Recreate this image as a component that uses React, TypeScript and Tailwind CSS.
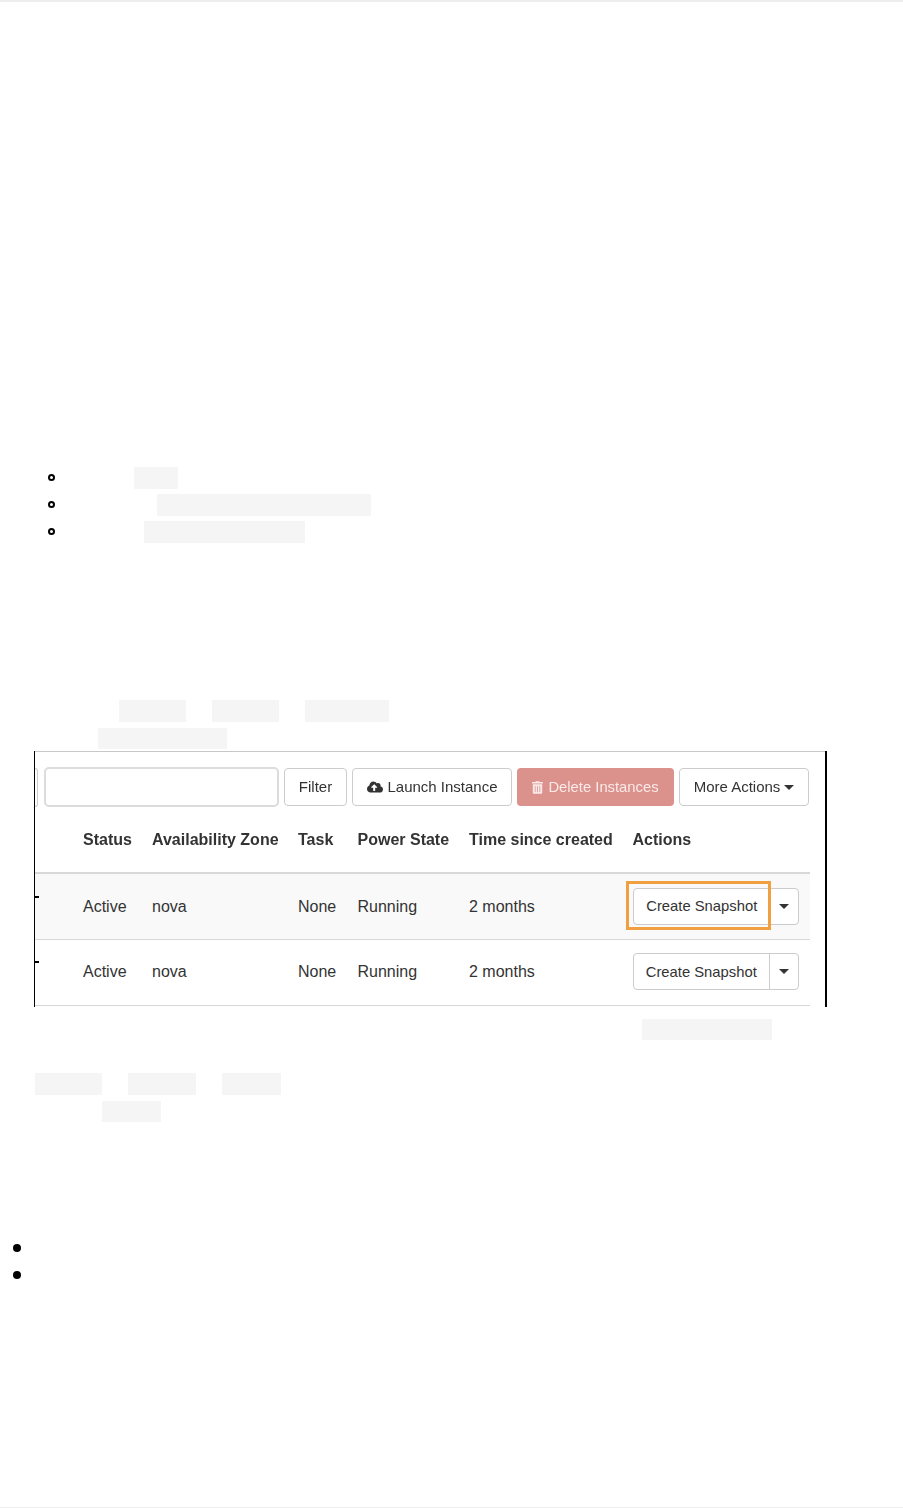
import { FaCloudUploadAlt, FaTrashAlt } from "react-icons/fa";

const gridCols = "grid grid-cols-[48px_69px_146px_59.5px_111.5px_163.5px_1fr] items-center";

function Block({ className }: { className: string }) {
  return <div className={`h-full bg-[#f5f5f5] ${className}`} />;
}

function Caret() {
  return (
    <span className="inline-block w-0 h-0 border-x-[5px] border-x-transparent border-t-[5px] border-t-[#333333]" />
  );
}

function Ring() {
  return <span className="ml-[48px] mb-[2px] w-[7px] h-[7px] rounded-full border-2 border-black" />;
}

function Dot() {
  return <span className="ml-[13px] w-[8px] h-[8px] rounded-full bg-black" />;
}

function ToolButton({ children, className = "" }: { children: React.ReactNode; className?: string }) {
  return (
    <button
      className={`h-[38px] flex items-center justify-center gap-[4px] rounded-[4px] border border-[#cccccc] bg-white text-[#333333] text-[15px] ${className}`}
    >
      {children}
    </button>
  );
}

function SubList() {
  return (
    <div className="flex flex-col gap-[5px] mt-[465px]">
      <div className="flex items-center h-[22px]">
        <Ring />
        <Block className="ml-[79px] w-[44px]" />
      </div>
      <div className="flex items-center h-[22px]">
        <Ring />
        <Block className="ml-[102px] w-[214px]" />
      </div>
      <div className="flex items-center h-[22px]">
        <Ring />
        <Block className="ml-[89px] w-[161px]" />
      </div>
    </div>
  );
}

function SnapshotButton({ divider }: { divider: boolean }) {
  return (
    <div className="flex h-[37px] w-[166.5px] rounded-[4px] border border-[#cccccc] bg-white text-[#333333] text-[14.8px]">
      <span className={`w-[136.5px] flex items-center justify-center ${divider ? "border-r border-[#cccccc]" : ""}`}>
        Create Snapshot
      </span>
      <span className="flex-1 flex items-center justify-center">
        <Caret />
      </span>
    </div>
  );
}

function Row({ striped, highlighted, className = "" }: { striped?: boolean; highlighted?: boolean; className?: string }) {
  return (
    <div
      className={`relative ${gridCols} h-[66px] text-[16px] text-[#333333] border-b border-[#d8d8d8] ${striped ? "bg-[#f9f9f9]" : "bg-white"} ${className}`}
    >
      <div className="h-full flex items-center">
        <span className="w-[4px] h-[2px] bg-black -mt-[20px]" />
      </div>
      <div>Active</div>
      <div>nova</div>
      <div>None</div>
      <div>Running</div>
      <div>2 months</div>
      <div>
        <SnapshotButton divider={!highlighted} />
      </div>
      {highlighted && (
        <div className="absolute left-[591px] top-[7px] w-[145px] h-[49px] border-[3px] border-[#f0a040]" />
      )}
    </div>
  );
}

function Screenshot() {
  return (
    <div className="ml-[34px] w-[793px] h-[256px] border-l-[1.5px] border-r-2 border-black font-['Liberation_Sans',Arial,sans-serif]">
      <div className="h-[1px] bg-[#c8c8c8]" />
      <div className="w-[775px] blur-[0.35px]">
        <div className="flex items-center h-[56px] pt-[14px]">
          <div className="w-[3px] h-[39px] rounded-r-[4px] border border-l-0 border-[#cccccc]" />
          <div className="ml-[6px] w-[235px] h-[40px] rounded-[5px] border-2 border-[#dcdcdc] bg-white" />
          <ToolButton className="ml-[5px] w-[63px]">Filter</ToolButton>
          <ToolButton className="ml-[5px] w-[160px] pl-[1px]">
            <FaCloudUploadAlt className="w-[16px] h-[16px]" />
            Launch Instance
          </ToolButton>
          <button className="ml-[5px] w-[157px] h-[38px] flex items-center justify-center gap-[5px] rounded-[4px] bg-[#db928c] text-[#f9e9e8] text-[14.8px]">
            <FaTrashAlt className="w-[11px] h-[13px]" />
            Delete Instances
          </button>
          <ToolButton className="ml-[5px] w-[130px]">
            More Actions
            <Caret />
          </ToolButton>
        </div>
        <div className={`${gridCols} h-[66px] text-[16px] font-bold text-[#333333] border-b-[2.5px] border-[#d8d8d8]`}>
          <div />
          <div>Status</div>
          <div>Availability Zone</div>
          <div>Task</div>
          <div>Power State</div>
          <div>Time since created</div>
          <div>Actions</div>
        </div>
        <Row striped highlighted />
        <Row className="pb-[1.5px]" />
      </div>
    </div>
  );
}

export default function App() {
  return (
    <div className="w-full h-[1508px] flex flex-col bg-white border-t-2 border-b border-[#eeeeee]">
      <SubList />

      <div className="flex h-[22px] mt-[157px]">
        <Block className="ml-[119px] w-[67px]" />
        <Block className="ml-[26px] w-[67px]" />
        <Block className="ml-[26px] w-[84px]" />
      </div>
      <div className="flex h-[21px] mt-[6px] mb-[2px]">
        <Block className="ml-[98px] w-[129px]" />
      </div>

      <Screenshot />

      <div className="flex h-[21px] mt-[12px]">
        <Block className="ml-[642px] w-[130px]" />
      </div>
      <div className="flex h-[22px] mt-[33px]">
        <Block className="ml-[35px] w-[67px]" />
        <Block className="ml-[26px] w-[68px]" />
        <Block className="ml-[26px] w-[59px]" />
      </div>
      <div className="flex h-[21px] mt-[6px]">
        <Block className="ml-[102px] w-[59px]" />
      </div>

      <div className="flex flex-col gap-[19px] mt-[122px]">
        <Dot />
        <Dot />
      </div>
    </div>
  );
}
